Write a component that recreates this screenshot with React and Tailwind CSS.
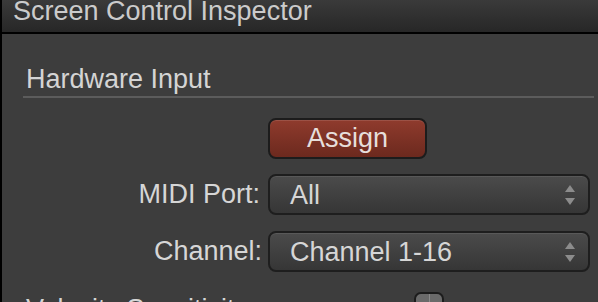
export default function App() {
  const font = { fontFamily: '"Liberation Sans", Arial, sans-serif' };
  return (
    <div className="w-[598px] h-[302px] overflow-hidden bg-black pl-[2px] flex flex-col" style={font}>
      <div className="h-[32px] shrink-0 bg-gradient-to-b from-[#3a3a3a] to-[#272727] pl-[11px] overflow-hidden">
        <div className="mt-[-2px] text-[27px] leading-[27px] text-[#cbcbcb]">Screen Control Inspector</div>
      </div>
      <div className="h-[2px] shrink-0 bg-black" />
      <div className="flex-1 bg-[#3d3d3d] flex flex-col">
        <div className="mt-[32px] ml-[24px] text-[27px] leading-[27px] text-[#d4d4d4]">Hardware Input</div>
        <div className="mt-[3px] ml-[21px] mr-[4px] h-[2px] bg-[#5c5c5c]" />
        <div className="mt-[20px] ml-[266px] w-[159px] h-[41px] shrink-0 rounded-[8px] border-2 border-[#1c1c1c] bg-gradient-to-b from-[#8f3b2d] to-[#6c291e] flex items-center justify-center text-[27px] text-[#e6dedb] shadow-[inset_0_1px_0_rgba(255,255,255,0.12)]">
          Assign
        </div>
        <div className="mt-[15px] flex items-center">
          <div className="w-[258px] text-right text-[27px] text-[#d6d6d6]">MIDI Port:</div>
          <Select value="All" />
        </div>
        <div className="mt-[16px] flex items-center">
          <div className="w-[260px] text-right text-[27px] text-[#d6d6d6]">Channel:</div>
          <div className="ml-[-2px]"><Select value="Channel 1-16" /></div>
        </div>
        <div className="mt-[24px] flex items-start">
          <div className="ml-[24px] w-[388px] text-[27px] leading-[27px] text-[#d6d6d6] whitespace-nowrap">Velocity Sensitivity</div>
          <div className="mt-[-4px] w-[30px] h-[30px] shrink-0 rounded-[7px] border-2 border-[#1c1c1c] bg-[#6a6a6a] flex justify-center">
            <div className="w-[1px] h-full bg-[#8a8a8a]" />
          </div>
        </div>
      </div>
    </div>
  );
}

function Select({ value }) {
  return (
    <div className="ml-[8px] w-[322px] h-[41px] rounded-[8px] border-2 border-[#1e1e1e] bg-gradient-to-b from-[#4b4b4b] to-[#363636] shadow-[inset_0_1px_0_rgba(255,255,255,0.08)] flex items-center pl-[20px] pr-[12px]">
      <div className="flex-1 text-[27px] text-[#d6d6d6] leading-[30px]">{value}</div>
      <svg width="12" height="24" viewBox="0 0 12 24">
        <path d="M6 2 L11 9 L1 9 Z" fill="#8c8c8c" />
        <path d="M6 22 L11 15 L1 15 Z" fill="#8c8c8c" />
      </svg>
    </div>
  );
}
